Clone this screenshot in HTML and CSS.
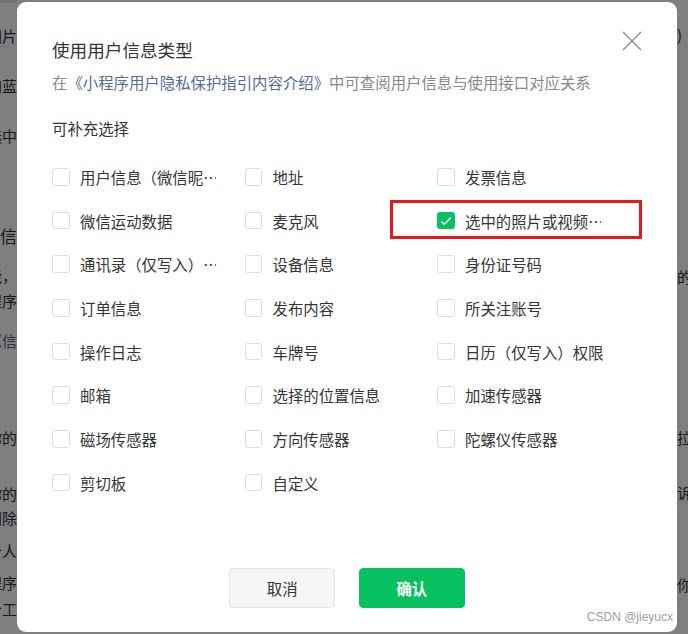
FILE: index.html
```html
<!DOCTYPE html>
<html lang="zh-CN">
<head>
<meta charset="utf-8">
<title>使用用户信息类型</title>
<link rel="stylesheet" href="styles.css">
</head>
<body>
<div class="page">
  <div class="bg-left">
    <p class="bg-line bg-cell">图片</p>
    <p class="bg-line m30">增加蓝</p>
    <p class="bg-line m30">未选中</p>
    <p class="bg-line m80 bg-h">文件信</p>
    <p class="bg-line m20">功能，</p>
    <p class="bg-line m5">小程序</p>
    <p class="bg-line m20 bg-link">《信</p>
    <p class="bg-line m77">你的</p>
    <p class="bg-line m36">你的</p>
    <p class="bg-line m4">删除</p>
    <p class="bg-line m13">个人</p>
    <p class="bg-line m12">程序</p>
    <p class="bg-line m6">个工</p>
  </div>
  <div class="bg-mid"></div>
  <div class="bg-right">
    <p class="bg-line r-first">)</p>
    <p class="bg-line r222">的</p>
    <p class="bg-line r141">拉</p>
    <p class="bg-line r35">诉</p>
    <p class="bg-line r72">你的</p>
  </div>
</div>

<div class="mask"></div>

<div class="modal">
  <button class="close" aria-label="关闭">
    <svg width="20" height="20" viewBox="0 0 20 20"><path d="M1 1 L19 19 M19 1 L1 19" stroke="#8a8a8a" stroke-width="1.3" fill="none"/></svg>
  </button>
  <h1 class="title">使用用户信息类型</h1>
  <p class="desc">在<a class="link">《小程序用户隐私保护指引内容介绍》</a>中可查阅用户信息与使用接口对应关系</p>
  <p class="section">可补充选择</p>
  <div class="grid">
    <label class="item"><span class="box"></span><span class="text">用户信息（微信昵<span class="dots">…</span></span></label>
    <label class="item"><span class="box"></span><span class="text">地址</span></label>
    <label class="item"><span class="box"></span><span class="text">发票信息</span></label>

    <label class="item"><span class="box"></span><span class="text">微信运动数据</span></label>
    <label class="item"><span class="box"></span><span class="text">麦克风</span></label>
    <label class="item"><span class="box checked"><svg width="12" height="10" viewBox="0 0 12 10"><path d="M1.2 5.2 L4.4 8.2 L10.8 1.6" stroke="#fff" stroke-width="1.4" fill="none"/></svg></span><span class="text">选中的照片或视频<span class="dots">…</span></span><span class="mark"></span></label>

    <label class="item"><span class="box"></span><span class="text">通讯录（仅写入）<span class="dots">…</span></span></label>
    <label class="item"><span class="box"></span><span class="text">设备信息</span></label>
    <label class="item"><span class="box"></span><span class="text">身份证号码</span></label>

    <label class="item"><span class="box"></span><span class="text">订单信息</span></label>
    <label class="item"><span class="box"></span><span class="text">发布内容</span></label>
    <label class="item"><span class="box"></span><span class="text">所关注账号</span></label>

    <label class="item"><span class="box"></span><span class="text">操作日志</span></label>
    <label class="item"><span class="box"></span><span class="text">车牌号</span></label>
    <label class="item"><span class="box"></span><span class="text">日历（仅写入）权限</span></label>

    <label class="item"><span class="box"></span><span class="text">邮箱</span></label>
    <label class="item"><span class="box"></span><span class="text">选择的位置信息</span></label>
    <label class="item"><span class="box"></span><span class="text">加速传感器</span></label>

    <label class="item"><span class="box"></span><span class="text">磁场传感器</span></label>
    <label class="item"><span class="box"></span><span class="text">方向传感器</span></label>
    <label class="item"><span class="box"></span><span class="text">陀螺仪传感器</span></label>

    <label class="item"><span class="box"></span><span class="text">剪切板</span></label>
    <label class="item"><span class="box"></span><span class="text">自定义</span></label>
  </div>
  <div class="footer">
    <button class="btn btn-cancel">取消</button>
    <button class="btn btn-ok">确认</button>
  </div>
</div>

<div class="watermark">CSDN @jieyucx</div>
</body>
</html>
```
FILE: styles.css
```css
* { box-sizing: border-box; }
html, body { margin: 0; padding: 0; }
body {
  width: 688px;
  height: 634px;
  overflow: hidden;
  background: #fff;
  font-family: "Noto Sans CJK SC", "Liberation Sans", sans-serif;
  color: #353535;
}

/* background page */
.page {
  display: flex;
  height: 634px;
}
.bg-left {
  width: 17px;
  overflow: hidden;
  display: flex;
  flex-direction: column;
  align-items: flex-end;
  padding-top: 23px;
  border-top: 3px solid #e6e6e6;
}
.bg-mid { flex: 1; }
.bg-right {
  width: 11px;
  overflow: hidden;
  display: flex;
  flex-direction: column;
  align-items: flex-start;
  padding-top: 25px;
}
.bg-line {
  margin: 0;
  font-size: 15px;
  line-height: 20px;
  height: 20px;
  white-space: nowrap;
  color: #333;
}
.bg-left .bg-cell { box-shadow: 0 8px 0 -7px #ddd; }
.bg-h { font-size: 17px; }
.bg-link { color: #576b95; }
.m4 { margin-top: 4px; }
.m5 { margin-top: 5px; }
.m6 { margin-top: 6px; }
.m12 { margin-top: 12px; }
.m13 { margin-top: 13px; }
.m20 { margin-top: 20px; }
.m30 { margin-top: 30px; }
.m36 { margin-top: 36px; }
.m77 { margin-top: 77px; }
.m80 { margin-top: 80px; }
.r222 { margin-top: 222px; }
.r141 { margin-top: 141px; }
.r35 { margin-top: 35px; }
.r72 { margin-top: 72px; }

.mask {
  position: fixed;
  inset: 0;
  background: rgba(0, 0, 0, 0.5);
}

/* modal */
.modal {
  position: fixed;
  top: 2px;
  left: 17px;
  width: 660px;
  height: 630px;
  background: #fff;
  border-radius: 9px;
  padding: 35px 35px 24px;
  display: flex;
  flex-direction: column;
}
.close {
  position: absolute;
  top: 29px;
  right: 35px;
  width: 20px;
  height: 20px;
  padding: 0;
  border: 0;
  background: none;
  display: flex;
}
.title {
  margin: 0;
  font-size: 17.6px;
  line-height: 26px;
  font-weight: 400;
  color: #353535;
}
.desc {
  margin: 8px 0 0;
  font-size: 15.4px;
  line-height: 22px;
  color: #888;
  white-space: nowrap;
}
.link { color: #576b95; }
.section {
  margin: 24px 0 0;
  font-size: 15.4px;
  line-height: 22px;
  color: #353535;
}
.grid {
  margin-top: 16px;
  display: grid;
  grid-template-columns: repeat(3, 192.5px);
  grid-auto-rows: 43.7px;
}
.item {
  position: relative;
  display: flex;
  align-items: center;
  gap: 10.4px;
}
.box {
  flex: none;
  width: 17.6px;
  height: 17.6px;
  border: 1px solid #dcdcdc;
  border-radius: 2.5px;
  background: #fff;
  display: flex;
  align-items: center;
  justify-content: center;
}
.box.checked {
  background: #07c160;
  border-color: #07c160;
}
.text {
  font-size: 15.4px;
  line-height: 22px;
  white-space: nowrap;
  color: #353535;
}
.dots {
  display: inline-block;
  width: 13px;
  overflow: hidden;
  vertical-align: top;
  letter-spacing: -2px;
}
.mark {
  position: absolute;
  top: 1px;
  left: -47px;
  width: 252px;
  height: 39px;
  border: 3px solid #e8161e;
}

.footer {
  margin-top: auto;
  display: flex;
  justify-content: center;
  gap: 24px;
}
.btn {
  width: 105.6px;
  height: 39.6px;
  border-radius: 4px;
  font-family: "Noto Sans CJK SC", sans-serif;
  font-size: 15.4px;
  padding: 0;
}
.btn-cancel {
  background: #f5f6f8;
  border: 1px solid #e3e5e8;
  color: #353535;
}
.btn-ok {
  background: #07c160;
  border: 1px solid #07c160;
  color: #fff;
  font-weight: 700;
}

.watermark {
  position: fixed;
  right: 15px;
  top: 609px;
  font-family: "Liberation Sans", sans-serif;
  font-size: 12px;
  line-height: 16px;
  color: #a0a0a0;
}
```
